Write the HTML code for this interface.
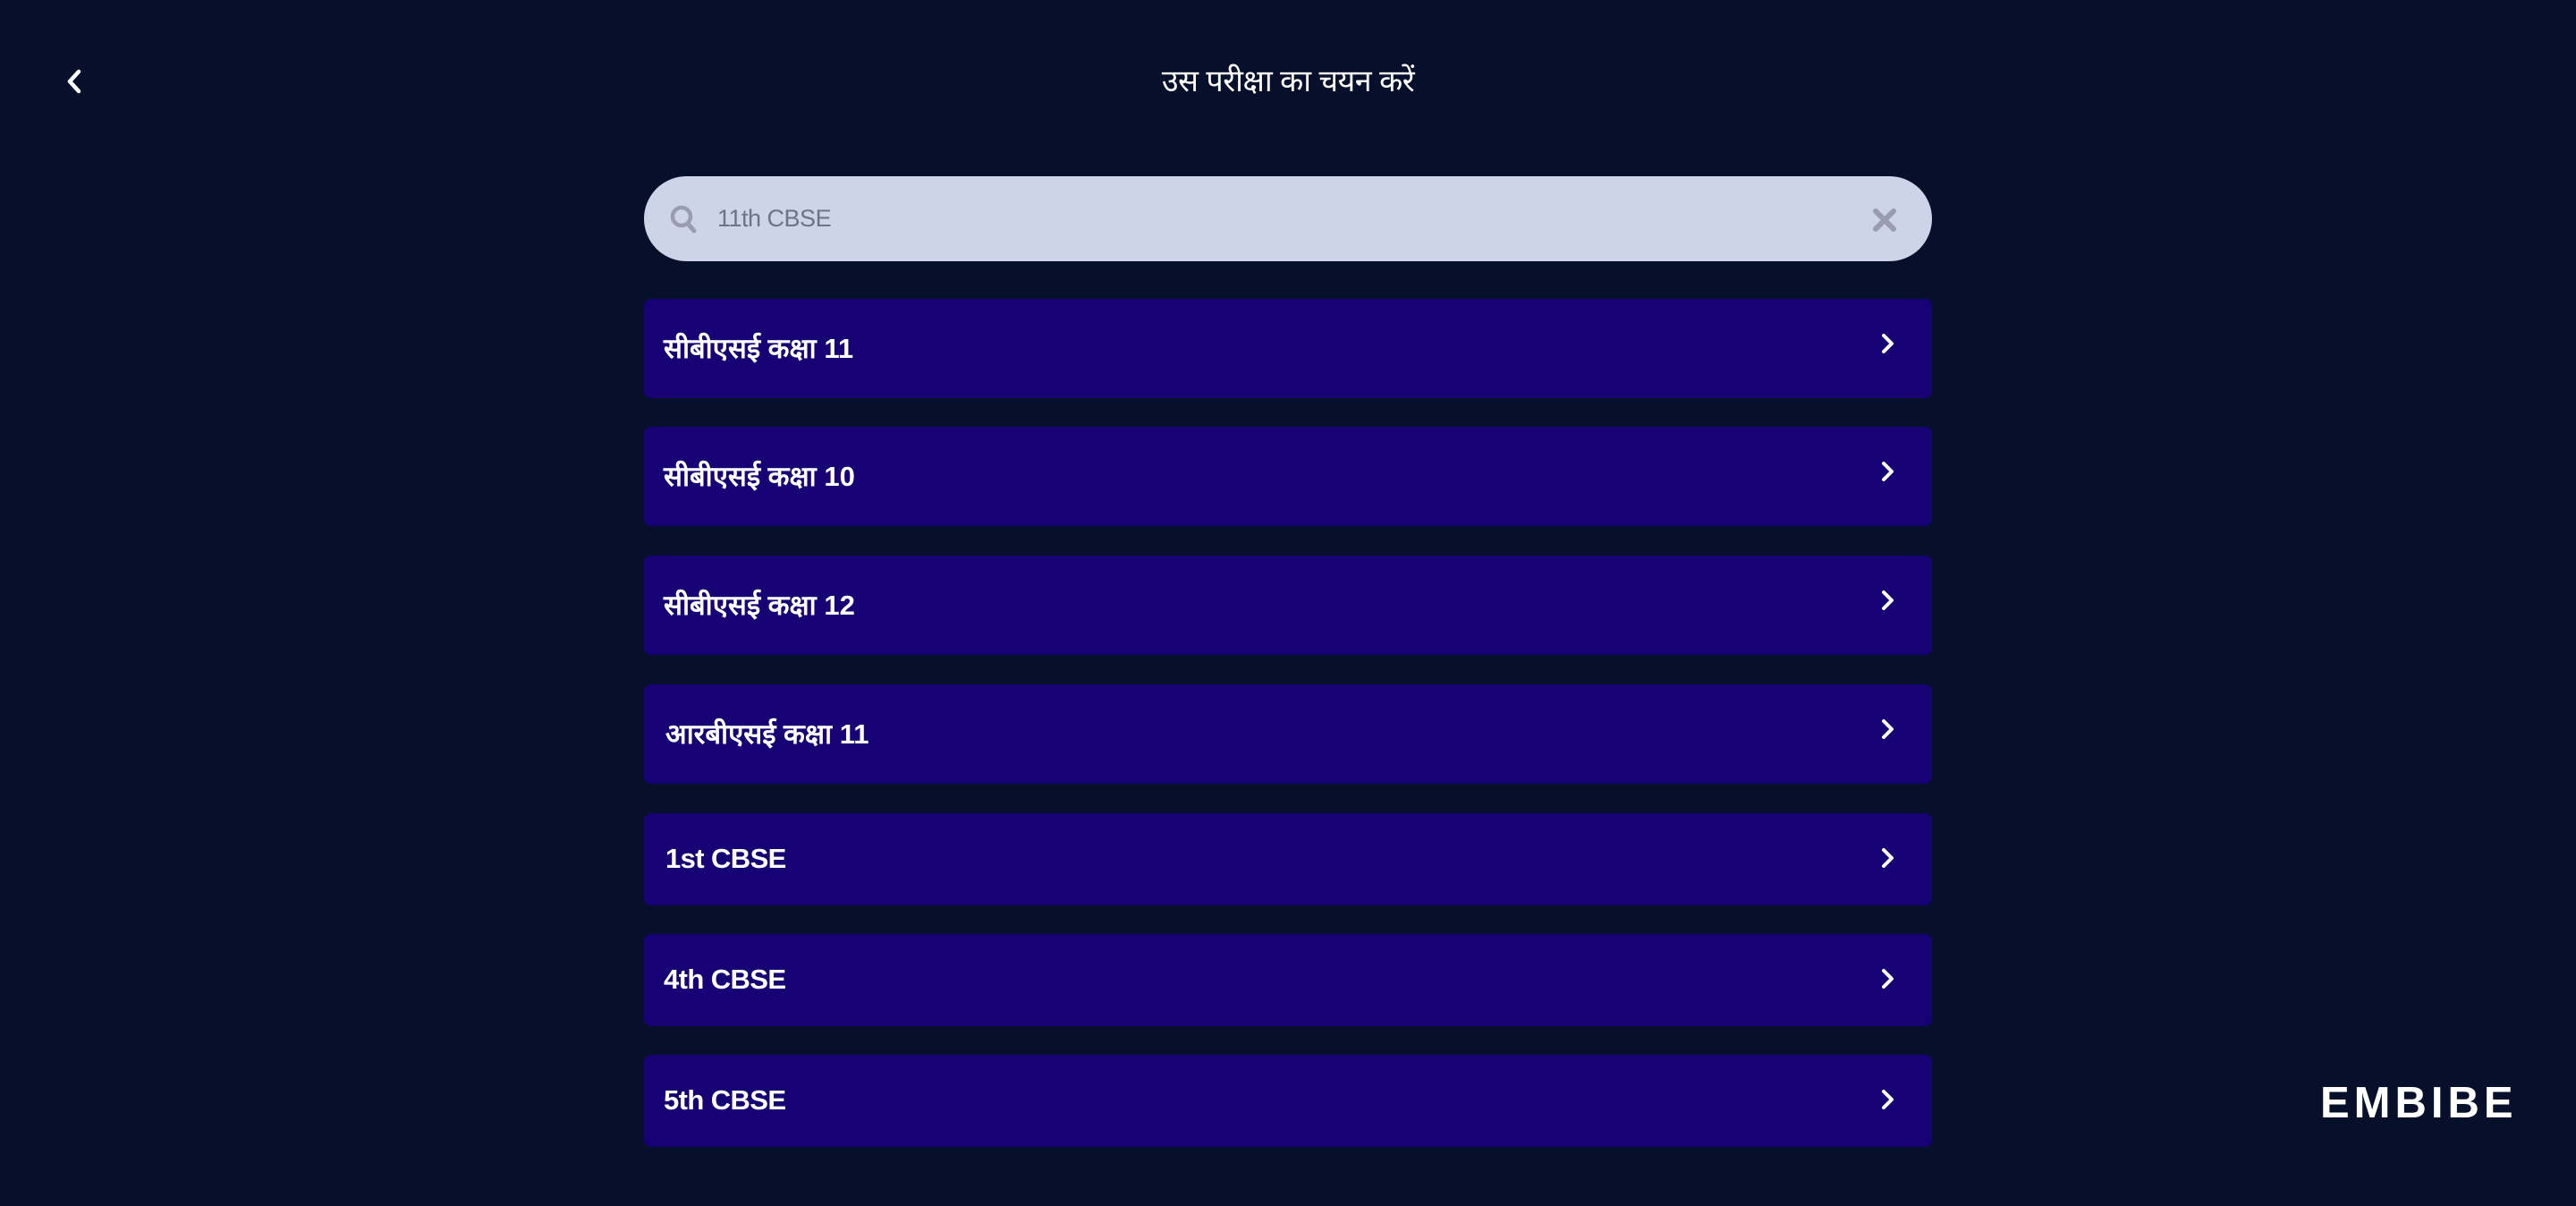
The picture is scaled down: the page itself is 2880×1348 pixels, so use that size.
<!DOCTYPE html>
<html><head><meta charset="utf-8"><style>
html,body{margin:0;padding:0;width:2880px;height:1348px;background:#07102a;overflow:hidden;font-family:"Liberation Sans",sans-serif;color:#fff}
.abs{position:absolute}
.row{position:absolute;left:720px;width:1440px;background:#160274;border-radius:8px}
.row span{position:absolute;left:22px;font-weight:bold;font-size:31px;letter-spacing:-0.6px;white-space:nowrap}
.row span.h{letter-spacing:0}
.row svg{position:absolute;left:1381px}
</style></head><body>
<svg class="abs" style="left:70px;top:74px" width="26" height="34" viewBox="0 0 26 34"><path d="M18 6 L8 17 L18 28" stroke="#fff" stroke-width="4.5" fill="none" stroke-linecap="round" stroke-linejoin="round"/></svg>
<div class="abs" style="left:1140px;width:600px;top:69px;text-align:center;font-size:34px;line-height:44px;letter-spacing:-0.5px">उस परीक्षा का चयन करें</div>

<div class="abs" style="left:720px;top:197px;width:1440px;height:95px;border-radius:48px;background:#cdd3e8"></div>
<svg class="abs" style="left:748px;top:228px" width="34" height="36" viewBox="0 0 34 36"><circle cx="14" cy="14" r="10" stroke="#9a9cb0" stroke-width="4.5" fill="none"/><path d="M21 22 L28 30" stroke="#9a9cb0" stroke-width="5" stroke-linecap="round"/></svg>
<div class="abs" style="left:802px;top:226px;font-size:27px;line-height:36px;color:#6f7288;letter-spacing:-0.5px">11th CBSE</div>
<svg class="abs" style="left:2093px;top:232px" width="28" height="28" viewBox="0 0 28 28"><path d="M4 4 L24 24 M24 4 L4 24" stroke="#9a9cb0" stroke-width="6" stroke-linecap="round"/></svg>

<div class="row" style="top:334px;height:111px"><span class="h" style="top:34px">सीबीएसई कक्षा 11</span><svg style="top:38px" width="20" height="24" viewBox="0 0 20 24"><path d="M5 3 L14 12 L5 21" stroke="#fff" stroke-width="4" fill="none" stroke-linecap="round" stroke-linejoin="round"/></svg></div>
<div class="row" style="top:477px;height:111px"><span class="h" style="top:34px">सीबीएसई कक्षा 10</span><svg style="top:38px" width="20" height="24" viewBox="0 0 20 24"><path d="M5 3 L14 12 L5 21" stroke="#fff" stroke-width="4" fill="none" stroke-linecap="round" stroke-linejoin="round"/></svg></div>
<div class="row" style="top:621px;height:111px"><span class="h" style="top:34px">सीबीएसई कक्षा 12</span><svg style="top:38px" width="20" height="24" viewBox="0 0 20 24"><path d="M5 3 L14 12 L5 21" stroke="#fff" stroke-width="4" fill="none" stroke-linecap="round" stroke-linejoin="round"/></svg></div>
<div class="row" style="top:765px;height:111px"><span class="h" style="top:34px;left:24px">आरबीएसई कक्षा 11</span><svg style="top:38px" width="20" height="24" viewBox="0 0 20 24"><path d="M5 3 L14 12 L5 21" stroke="#fff" stroke-width="4" fill="none" stroke-linecap="round" stroke-linejoin="round"/></svg></div>
<div class="row" style="top:909px;height:103px"><span style="top:33px;left:24px">1st CBSE</span><svg style="top:38px" width="20" height="24" viewBox="0 0 20 24"><path d="M5 3 L14 12 L5 21" stroke="#fff" stroke-width="4" fill="none" stroke-linecap="round" stroke-linejoin="round"/></svg></div>
<div class="row" style="top:1044px;height:103px"><span style="top:33px">4th CBSE</span><svg style="top:38px" width="20" height="24" viewBox="0 0 20 24"><path d="M5 3 L14 12 L5 21" stroke="#fff" stroke-width="4" fill="none" stroke-linecap="round" stroke-linejoin="round"/></svg></div>
<div class="row" style="top:1179px;height:103px"><span style="top:33px">5th CBSE</span><svg style="top:38px" width="20" height="24" viewBox="0 0 20 24"><path d="M5 3 L14 12 L5 21" stroke="#fff" stroke-width="4" fill="none" stroke-linecap="round" stroke-linejoin="round"/></svg></div>

<div class="abs" style="left:2594px;top:1205px;font-size:49px;line-height:56px;font-weight:bold;letter-spacing:5px">EMBIBE</div>
</body></html>
